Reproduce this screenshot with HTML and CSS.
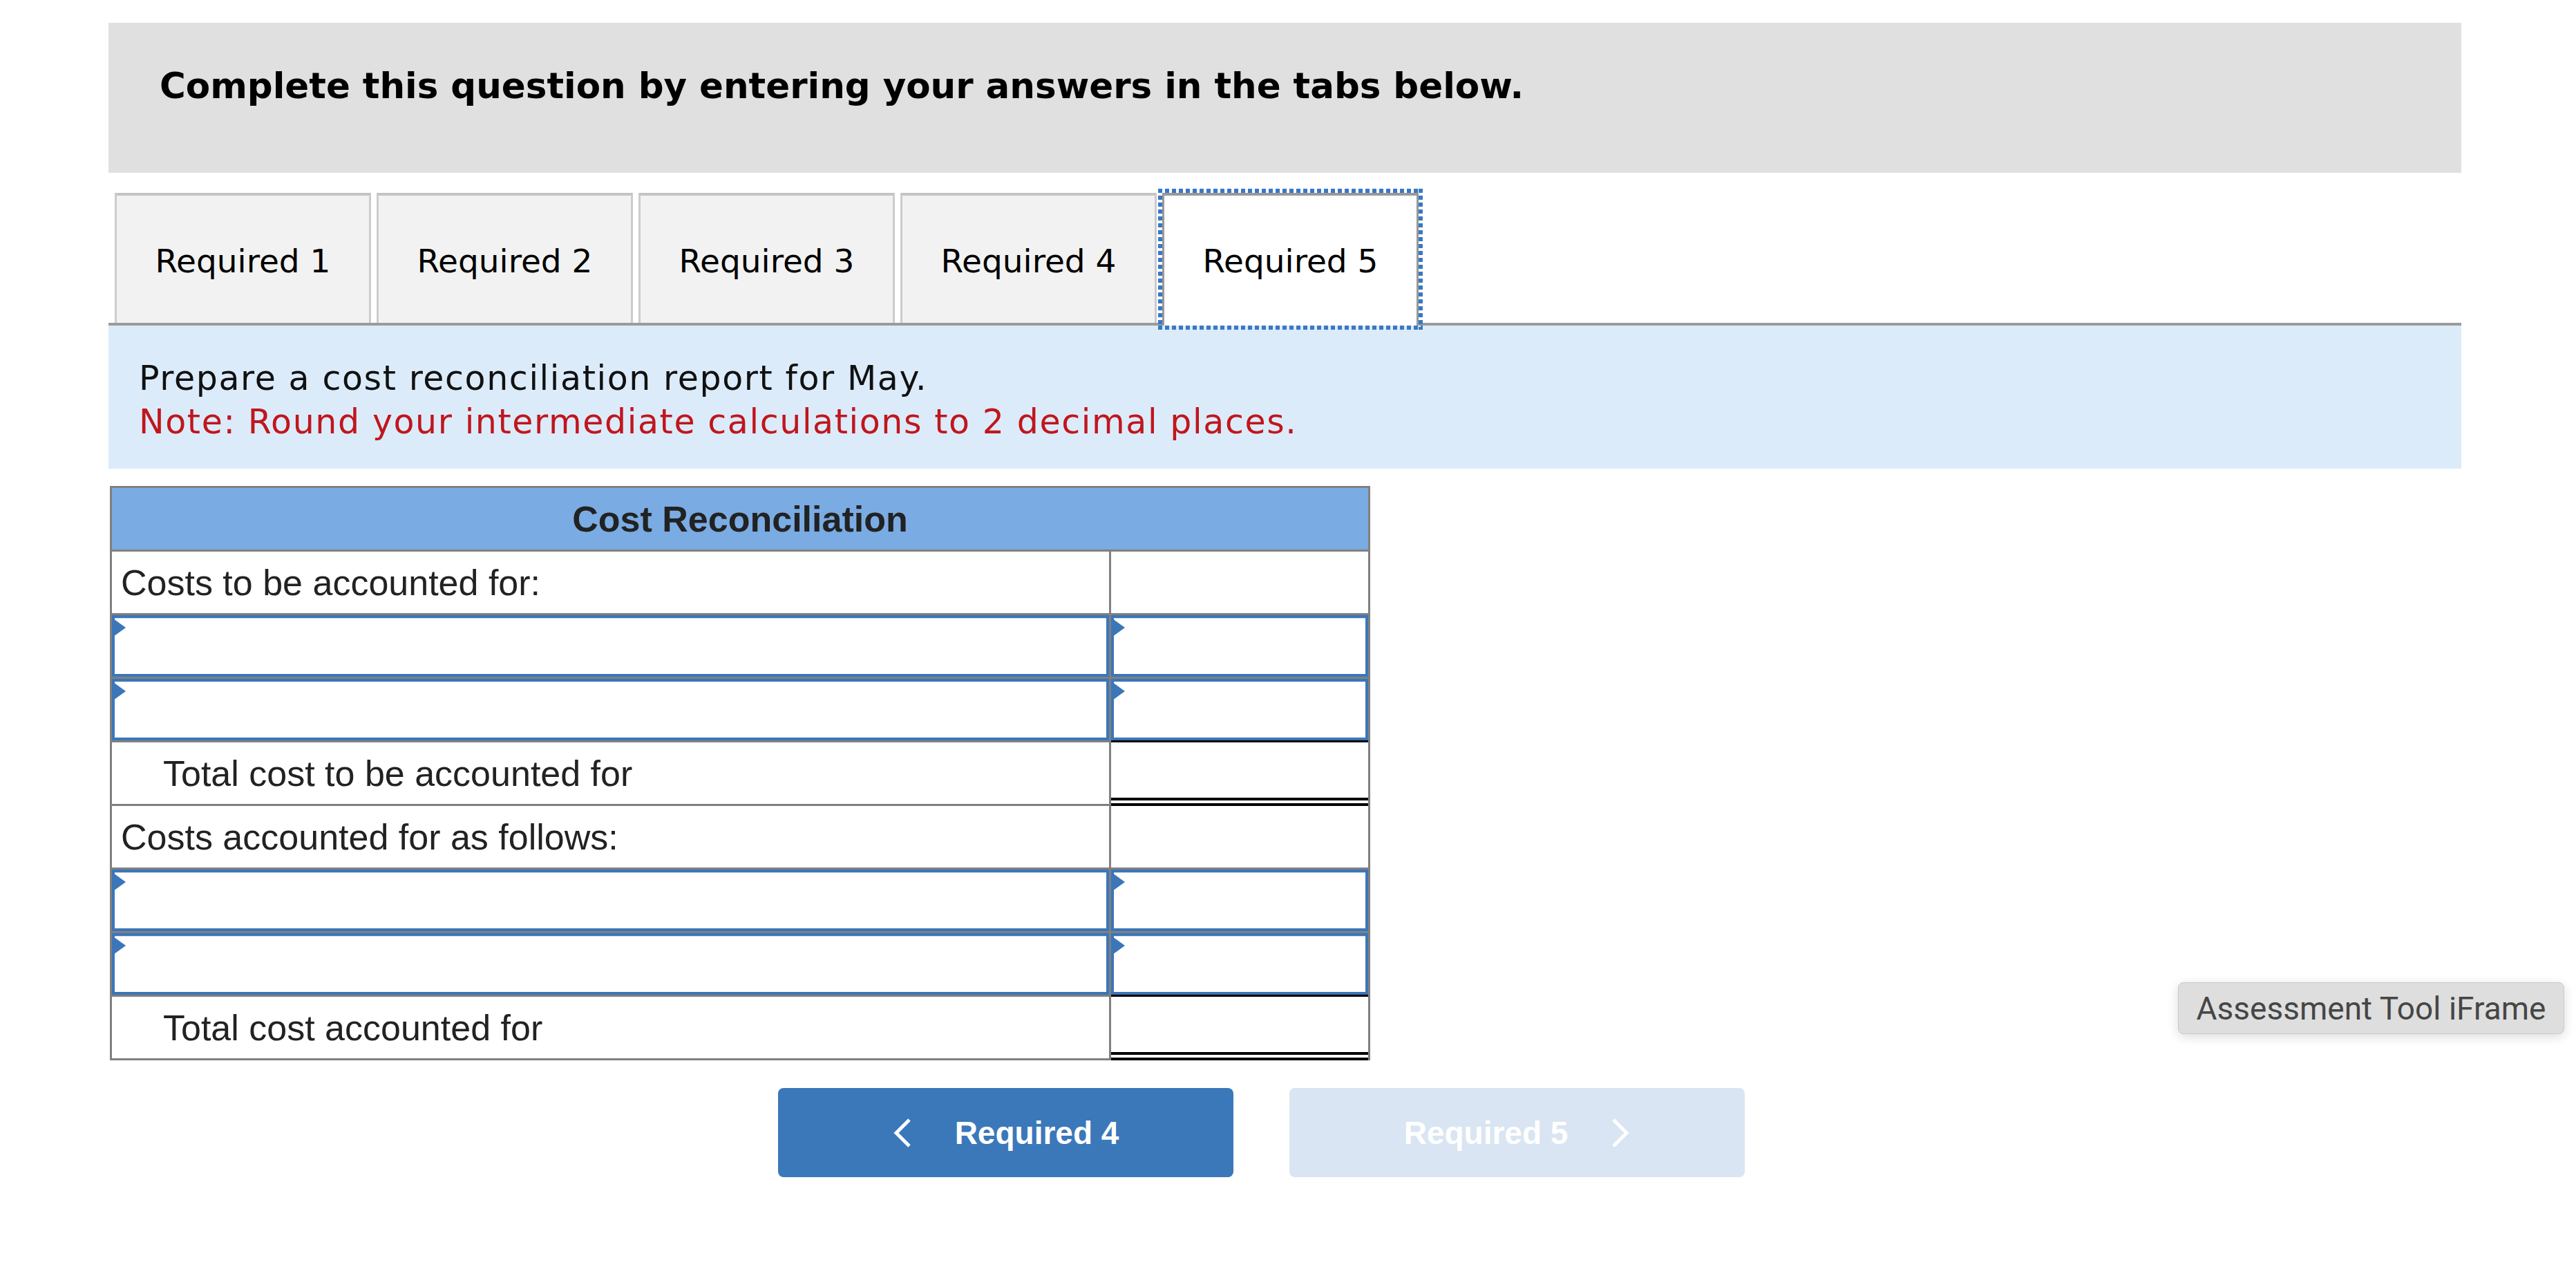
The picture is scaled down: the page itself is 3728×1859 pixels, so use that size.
FILE: index.html
```html
<!DOCTYPE html>
<html lang="en">
<head>
<meta charset="utf-8">
<title>Cost Reconciliation</title>
<link rel="stylesheet" href="styles.css">
</head>
<body>
<div class="page">
  <div class="header">
    <h1 class="title">Complete this question by entering your answers in the tabs below.</h1>
  </div>

  <div class="tabs">
    <div class="tab">Required 1</div>
    <div class="tab">Required 2</div>
    <div class="tab">Required 3</div>
    <div class="tab">Required 4</div>
    <div class="tab active">Required 5</div>
  </div>

  <div class="prompt">
    <p class="prompt-main">Prepare a cost reconciliation report for May.</p>
    <p class="prompt-note">Note: Round your intermediate calculations to 2 decimal places.</p>
  </div>

  <div class="recon">
    <div class="recon-head">Cost Reconciliation</div>

    <div class="cell label">Costs to be accounted for:</div>
    <div class="cell"></div>

    <div class="cell input-cell"><span class="flag"></span><input class="field" type="text"></div>
    <div class="cell input-cell"><span class="flag"></span><input class="field" type="text"></div>

    <div class="cell input-cell"><span class="flag"></span><input class="field" type="text"></div>
    <div class="cell input-cell"><span class="flag"></span><input class="field" type="text"></div>

    <div class="cell label indent">Total cost to be accounted for</div>
    <div class="cell total"></div>

    <div class="cell label">Costs accounted for as follows:</div>
    <div class="cell"></div>

    <div class="cell input-cell"><span class="flag"></span><input class="field" type="text"></div>
    <div class="cell input-cell"><span class="flag"></span><input class="field" type="text"></div>

    <div class="cell input-cell"><span class="flag"></span><input class="field" type="text"></div>
    <div class="cell input-cell"><span class="flag"></span><input class="field" type="text"></div>

    <div class="cell label indent">Total cost accounted for</div>
    <div class="cell total"></div>
  </div>

  <div class="nav">
    <button class="nav-btn prev" type="button">
      <svg class="chev" width="28" height="44" viewBox="0 0 28 44"><polyline points="24,3 5,22 24,41" fill="none" stroke="#ffffff" stroke-width="5"/></svg>
      <span>Required 4</span>
    </button>
    <button class="nav-btn next" type="button" disabled>
      <span>Required 5</span>
      <svg class="chev" width="28" height="44" viewBox="0 0 28 44"><polyline points="4,3 23,22 4,41" fill="none" stroke="#ffffff" stroke-width="5"/></svg>
    </button>
  </div>
</div>

<div class="tooltip">Assessment Tool iFrame</div>
</body>
</html>
```

FILE: styles.css
```css
html, body {
  margin: 0;
  padding: 0;
  background: #ffffff;
}

body {
  font-family: "DejaVu Sans", Verdana, sans-serif;
  color: #000;
  position: relative;
  min-height: 1859px;
}

.page {
  padding: 33px 0 0 157px;
}

.header {
  width: 3405px;
  height: 217px;
  box-sizing: border-box;
  padding: 61px 0 0 74px;
  background: #e0e0e0;
}

.title {
  margin: 0;
  font-family: "DejaVu Sans", Verdana, sans-serif;
  font-weight: 700;
  font-size: 51.5px;
  line-height: 61px;
  color: #000;
}

.tabs {
  width: 3405px;
  box-sizing: border-box;
  margin-top: 29px;
  padding-left: 9px;
  display: flex;
  align-items: flex-end;
  gap: 8px;
  border-bottom: 4px solid #9b9b9b;
}

.tab {
  width: 371px;
  height: 188px;
  box-sizing: border-box;
  padding-top: 5px;
  background: #f2f2f2;
  border: 3px solid #cccccc;
  border-top: 4px solid #c4c4c4;
  border-bottom: 0;
  display: flex;
  align-items: center;
  justify-content: center;
  font-size: 47px;
  color: #000;
}

.tab.active {
  position: relative;
  height: 192px;
  margin-bottom: -4px;
  padding-bottom: 4px;
  background: #ffffff;
  border-color: #999999;
  z-index: 1;
}

.tab.active::after {
  content: "";
  position: absolute;
  left: -9px;
  right: -9px;
  top: -10px;
  bottom: -6px;
  pointer-events: none;
  background:
    repeating-linear-gradient(90deg, #3a78c4 0 6px, transparent 6px 10px) top left / 100% 6px no-repeat,
    repeating-linear-gradient(90deg, #3a78c4 0 6px, transparent 6px 10px) bottom left / 100% 6px no-repeat,
    repeating-linear-gradient(180deg, #3a78c4 0 6px, transparent 6px 10px) top left / 6px 100% no-repeat,
    repeating-linear-gradient(180deg, #3a78c4 0 6px, transparent 6px 10px) top right / 6px 100% no-repeat;
}

.prompt {
  width: 3405px;
  height: 207px;
  box-sizing: border-box;
  padding: 45px 0 0 44px;
  background: #dcebf9;
}

.prompt p {
  margin: 0;
  font-size: 49px;
  line-height: 63px;
  letter-spacing: 1.6px;
}

.prompt-main {
  color: #111;
}

.prompt-note {
  color: #c0161d;
}

.recon {
  margin: 25px 0 0 2px;
  width: 1824px;
  box-sizing: border-box;
  padding: 3px;
  display: grid;
  grid-template-columns: 1443px 372px;
  grid-auto-rows: 89px;
  gap: 3px;
  background: #808080;
  font-family: "Liberation Sans", Arial, sans-serif;
  font-size: 52px;
  color: #222;
}

.recon-head {
  grid-column: 1 / -1;
  background: #7aabe3;
  display: flex;
  align-items: center;
  justify-content: center;
  font-weight: 700;
  color: #222;
}

.cell {
  background: #ffffff;
}

.label {
  display: flex;
  align-items: center;
  padding-left: 13px;
  white-space: nowrap;
}

.label.indent {
  padding-left: 74px;
}

.input-cell {
  position: relative;
}

.field {
  display: block;
  width: 100%;
  height: 100%;
  box-sizing: border-box;
  margin: 0;
  padding: 0;
  border: 4px solid #3b76ba;
  box-shadow: inset 0 1px 0 #cfe0f3;
  background: #ffffff;
  outline: none;
  font-family: "Liberation Sans", Arial, sans-serif;
  font-size: 52px;
}

.flag {
  position: absolute;
  left: 2px;
  top: 5px;
  width: 0;
  height: 0;
  border-top: 13px solid transparent;
  border-bottom: 13px solid transparent;
  border-left: 18px solid #3b76ba;
}

.total {
  margin: -3px 0;
  border-top: 3px solid #000;
  border-bottom: 12px double #000;
}

.nav {
  margin: 40px 0 0 969px;
  display: flex;
  gap: 81px;
}

.nav-btn {
  width: 659px;
  height: 129px;
  border: 0;
  border-radius: 8px;
  display: flex;
  align-items: center;
  justify-content: center;
  gap: 62px;
  padding: 0;
  font-family: "Liberation Sans", Arial, sans-serif;
  font-weight: 700;
  font-size: 46px;
  color: #ffffff;
}

.nav-btn.prev {
  background: #3b78b9;
}

.nav-btn.next {
  background: #d9e5f2;
}

.chev {
  display: block;
}

.tooltip {
  position: absolute;
  left: 3152px;
  top: 1421px;
  width: 559px;
  height: 75px;
  box-sizing: border-box;
  background: #dedede;
  border: 1px solid #cacaca;
  border-radius: 8px;
  box-shadow: 0 4px 16px rgba(0, 0, 0, 0.14);
  display: flex;
  align-items: center;
  justify-content: center;
  font-family: Roboto, "Liberation Sans", sans-serif;
  font-size: 46px;
  color: #464646;
}
```
